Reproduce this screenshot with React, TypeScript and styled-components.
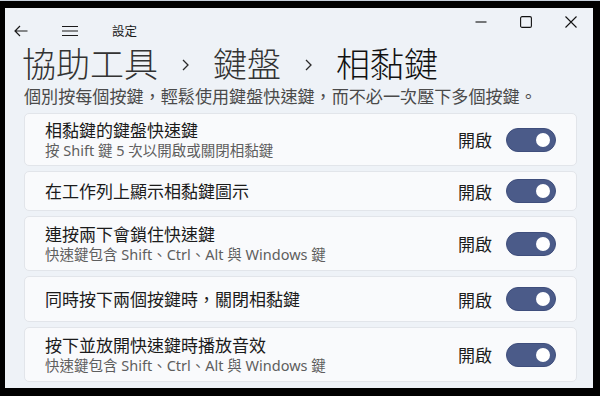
import React from "react";
import styled, { createGlobalStyle } from "styled-components";

const GlobalStyle = createGlobalStyle`
  html, body {
    margin: 0;
    padding: 0;
    background: #000;
  }
  body {
    font-family: "Noto Sans", "Noto Sans CJK TC", sans-serif;
  }
`;

const Frame = styled.div`
  width: 600px;
  height: 396px;
  box-sizing: border-box;
  background: #000;
  border-top: 1px solid #c8d1dc;
  padding: 7px 7px 8px 5px;
  display: flex;
`;

const Window = styled.div`
  flex: 1;
  background: #eef2f7;
  display: flex;
  flex-direction: column;
  overflow: hidden;
`;

const TitleBar = styled.div`
  height: 34px;
  display: flex;
  justify-content: space-between;
  align-items: flex-start;
`;

const NavGroup = styled.div`
  display: flex;
  align-items: center;
  padding: 15px 0 0 9px;
  color: #1a1a1a;
`;

const NavButton = styled.div<{ $w: number; $gap?: number }>`
  width: ${(p) => p.$w}px;
  height: 16px;
  margin-left: ${(p) => p.$gap ?? 0}px;
  display: grid;
  place-items: center;
`;

const AppName = styled.span`
  font-family: "Noto Sans CJK TC", sans-serif;
  font-size: 12.5px;
  line-height: 16px;
  margin-left: 34px;
  color: #1a1a1a;
`;

const Controls = styled.div`
  display: flex;
  padding-top: 6px;
`;

const ControlButton = styled.div`
  width: 45px;
  height: 16px;
  display: grid;
  place-items: center;
  color: #111;
`;

const Breadcrumb = styled.div`
  display: flex;
  align-items: center;
  padding-left: 17px;
  height: 42px;
  font-family: "Noto Sans CJK TC", sans-serif;
  font-weight: 300;
  font-size: 34px;
  line-height: 42px;
`;

const Crumb = styled.span<{ $current?: boolean }>`
  color: ${(p) => (p.$current ? "#111" : "#333")};
`;

const Chevron = styled.span`
  width: 55px;
  display: grid;
  place-items: center;
  padding-top: 4px;
`;

const Description = styled.div`
  padding-left: 19px;
  font-family: "Noto Sans CJK TC", sans-serif;
  font-size: 17.1px;
  line-height: 24px;
  color: #4a4a4a;
`;

const List = styled.div`
  display: flex;
  flex-direction: column;
  gap: 5px;
  padding: 5px 16px 0 19px;
`;

const Card = styled.div<{ $h: number }>`
  height: ${(p) => p.$h}px;
  box-sizing: border-box;
  background: #f9fafc;
  border: 1px solid #e2e5ea;
  border-radius: 5px;
  display: flex;
  align-items: center;
  padding: 0 20px;
`;

const TextBlock = styled.div`
  flex: 1;
  display: flex;
  flex-direction: column;
`;

const Title = styled.div`
  font-size: 17px;
  line-height: 21px;
  color: #1b1b1b;
`;

const Sub = styled.div`
  font-size: 14.5px;
  line-height: 19px;
  color: #5e5e5e;
`;

const StateLabel = styled.span`
  font-size: 17px;
  color: #1b1b1b;
  margin-right: 14px;
`;

const Toggle = styled.div`
  width: 50px;
  height: 24px;
  box-sizing: border-box;
  border-radius: 12px;
  background: #4b5b89;
  border: 1px solid #3f4e7c;
  display: flex;
  align-items: center;
  justify-content: flex-end;
  padding-right: 5px;
`;

const Knob = styled.div`
  width: 14px;
  height: 14px;
  border-radius: 50%;
  background: #fff;
`;

const ChevronIcon = () => (
  <svg width="9" height="14" viewBox="0 0 9 14">
    <polyline points="2,2 7,7 2,12" fill="none" stroke="#2a2a2a" strokeWidth="1.3" />
  </svg>
);

const items = [
  { title: "相黏鍵的鍵盤快速鍵", sub: "按 Shift 鍵 5 次以開啟或關閉相黏鍵", h: 53 },
  { title: "在工作列上顯示相黏鍵圖示", h: 40 },
  { title: "連按兩下會鎖住快速鍵", sub: "快速鍵包含 Shift、Ctrl、Alt 與 Windows 鍵", h: 55 },
  { title: "同時按下兩個按鍵時，關閉相黏鍵", h: 46 },
  { title: "按下並放開快速鍵時播放音效", sub: "快速鍵包含 Shift、Ctrl、Alt 與 Windows 鍵", h: 55 },
];

const App: React.FC = () => {
  return (
    <>
      <GlobalStyle />
      <Frame>
        <Window>
          <TitleBar>
            <NavGroup>
              <NavButton $w={14}>
                <svg width="14" height="12" viewBox="0 0 14 12">
                  <path d="M6 1 L1 6 L6 11 M1 6 H13.5" fill="none" stroke="#1a1a1a" strokeWidth="1.2" />
                </svg>
              </NavButton>
              <NavButton $w={16} $gap={34}>
                <svg width="16" height="12" viewBox="0 0 16 12">
                  <path d="M0 1.5 H16 M0 6 H16 M0 10.5 H16" stroke="#1a1a1a" strokeWidth="1.2" />
                </svg>
              </NavButton>
              <AppName>設定</AppName>
            </NavGroup>
            <Controls>
              <ControlButton>
                <svg width="12" height="12" viewBox="0 0 12 12">
                  <path d="M0.5 6 H11.5" stroke="#111" strokeWidth="1.1" />
                </svg>
              </ControlButton>
              <ControlButton>
                <svg width="12" height="12" viewBox="0 0 12 12">
                  <rect x="0.6" y="0.6" width="10.8" height="10.8" rx="1.5" fill="none" stroke="#111" strokeWidth="1.1" />
                </svg>
              </ControlButton>
              <ControlButton>
                <svg width="12" height="12" viewBox="0 0 12 12">
                  <path d="M0.5 0.5 L11.5 11.5 M11.5 0.5 L0.5 11.5" stroke="#111" strokeWidth="1.1" />
                </svg>
              </ControlButton>
            </Controls>
          </TitleBar>
          <Breadcrumb>
            <Crumb>協助工具</Crumb>
            <Chevron>
              <ChevronIcon />
            </Chevron>
            <Crumb>鍵盤</Crumb>
            <Chevron>
              <ChevronIcon />
            </Chevron>
            <Crumb $current>相黏鍵</Crumb>
          </Breadcrumb>
          <Description>個別按每個按鍵，輕鬆使用鍵盤快速鍵，而不必一次壓下多個按鍵。</Description>
          <List>
            {items.map((it) => (
              <Card key={it.title} $h={it.h}>
                <TextBlock>
                  <Title>{it.title}</Title>
                  {it.sub && <Sub>{it.sub}</Sub>}
                </TextBlock>
                <StateLabel>開啟</StateLabel>
                <Toggle>
                  <Knob />
                </Toggle>
              </Card>
            ))}
          </List>
        </Window>
      </Frame>
    </>
  );
};

export default App;
